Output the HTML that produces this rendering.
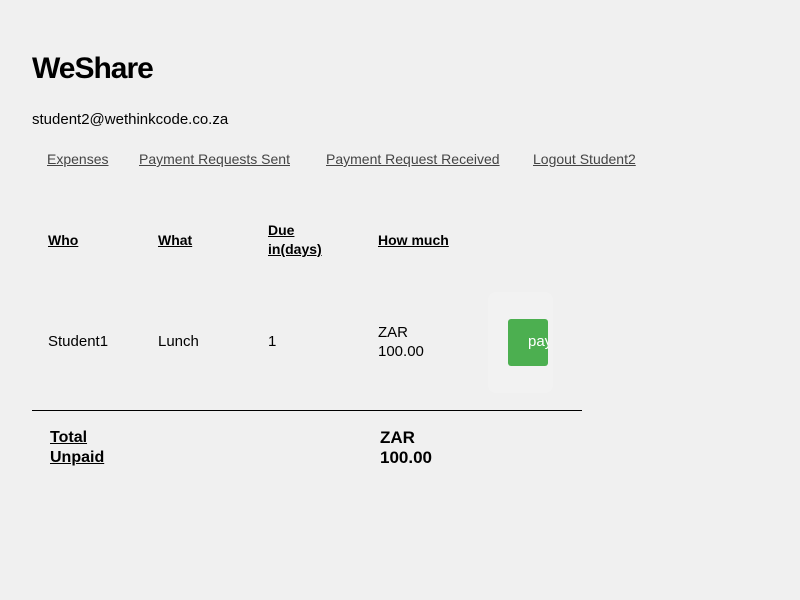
<!DOCTYPE html>
<html><head><style>
body{margin:0;width:800px;height:600px;background:#f0f0f0;font-family:"Liberation Sans",sans-serif;color:#000;position:relative;overflow:hidden}
.a{position:absolute;white-space:nowrap}
h1{position:absolute;left:32px;top:52px;margin:0;font-size:30px;font-weight:bold;letter-spacing:-1px}
.nav{font-size:14px;color:#444;text-decoration:underline;top:151px}
.th{font-size:14px;font-weight:bold;text-decoration:underline;line-height:19px}
.td{font-size:15px;line-height:19px}
</style></head><body>
<h1>WeShare</h1>
<div class="a" style="left:32px;top:111px;font-size:15px">student2@wethinkcode.co.za</div>
<div class="a nav" style="left:47px">Expenses</div>
<div class="a nav" style="left:139px">Payment Requests Sent</div>
<div class="a nav" style="left:326px">Payment Request Received</div>
<div class="a nav" style="left:533px">Logout Student2</div>
<div class="a th" style="left:48px;top:231px">Who</div>
<div class="a th" style="left:158px;top:231px">What</div>
<div class="a th" style="left:268px;top:221px">Due<br>in(days)</div>
<div class="a th" style="left:378px;top:231px">How much</div>
<div class="a td" style="left:48px;top:332px">Student1</div>
<div class="a td" style="left:158px;top:332px">Lunch</div>
<div class="a td" style="left:268px;top:332px">1</div>
<div class="a td" style="left:378px;top:323px">ZAR<br>100.00</div>
<div class="a" style="left:488px;top:292px;width:65px;height:101px;background:#f2f2f2;border-radius:8px"></div>
<div class="a" style="left:508px;top:319px;width:40px;height:47px;background:#4caf50;border-radius:3px;overflow:hidden"><span style="position:absolute;left:20px;top:14px;color:#fff;font-size:15px">pay</span></div>
<div class="a" style="left:32px;top:410px;width:550px;height:1px;background:#000"></div>
<div class="a th" style="left:50px;top:428px;font-size:16px;line-height:20px">Total<br>Unpaid</div>
<div class="a" style="left:380px;top:428px;font-size:17px;line-height:20px;font-weight:bold">ZAR<br>100.00</div>
</body></html>
